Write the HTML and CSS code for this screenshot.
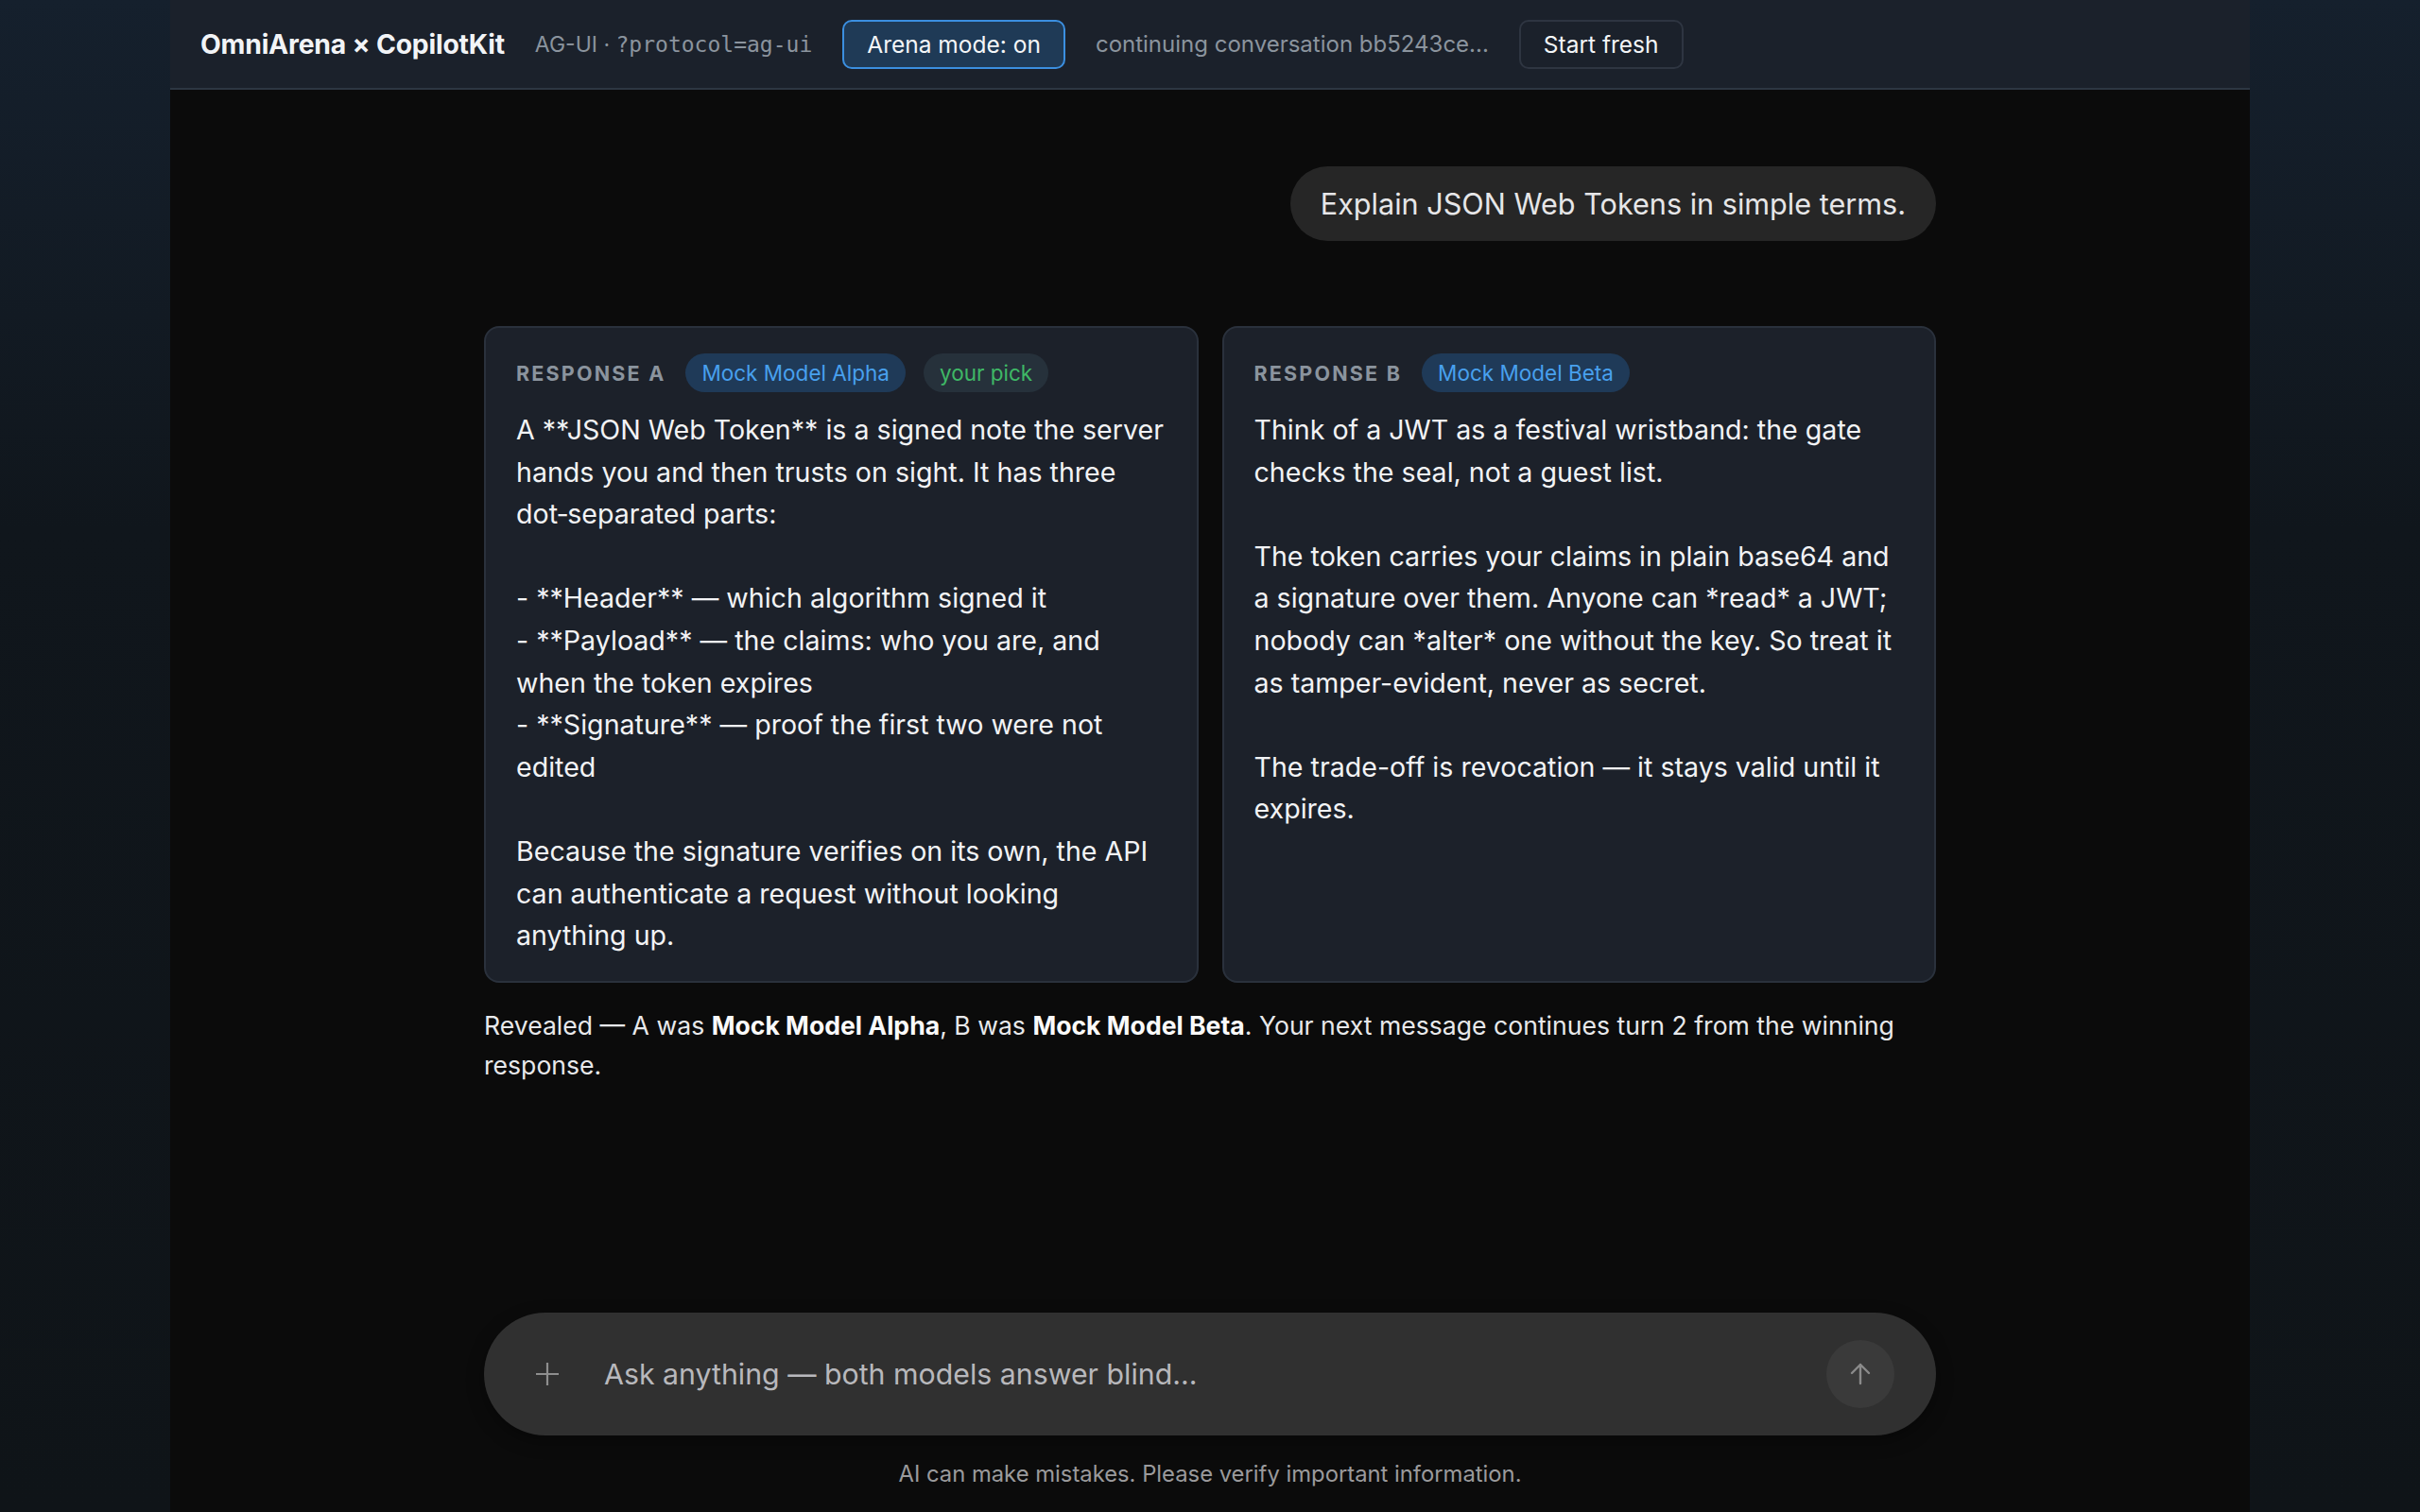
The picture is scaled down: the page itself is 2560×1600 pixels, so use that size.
FILE: index.html
```html
<!DOCTYPE html>
<html lang="en">
<head>
    <meta charset="UTF-8">
    <meta name="viewport" content="width=device-width, initial-scale=1.0">
    <title>OmniArena × CopilotKit</title>
    <link rel="stylesheet" href="styles.css">
</head>
<body>
<div class="app">
    <header class="topbar">
        <span class="brand">OmniArena × CopilotKit</span>
        <span class="proto">AG-UI · <code>?protocol=ag-ui</code></span>
        <button class="arena-btn">Arena mode: on</button>
        <span class="convo">continuing conversation bb5243ce...</span>
        <button class="fresh-btn">Start fresh</button>
    </header>

    <main class="thread">
        <div class="column">
            <div class="user-row">
                <div class="user-bubble">Explain JSON Web Tokens in simple terms.</div>
            </div>

            <div class="pair">
                <div class="card">
                    <div class="card-head">
                        <span class="label">Response A</span>
                        <span class="badge model">Mock Model Alpha</span>
                        <span class="badge pick">your pick</span>
                    </div>
<div class="card-body">A **JSON Web Token** is a signed note the server hands you and then trusts on sight. It has three dot&#8209;separated parts:

- **Header** — which algorithm signed it
- **Payload** — the claims: who you are, and when the token expires
- **Signature** — proof the first two were not edited

Because the signature verifies on its own, the API can authenticate a request without looking anything up.</div>
                </div>
                <div class="card">
                    <div class="card-head">
                        <span class="label">Response B</span>
                        <span class="badge model">Mock Model Beta</span>
                    </div>
<div class="card-body">Think of a JWT as a festival wristband: the gate checks the seal, not a guest list.

The token carries your claims in plain base64 and a signature over them. Anyone can *read* a JWT; nobody can *alter* one without the key. So treat it as tamper-evident, never as secret.

The trade-off is revocation — it stays valid until it expires.</div>
                </div>
            </div>

            <p class="reveal">Revealed — A was <b>Mock Model Alpha</b>, B was <b>Mock Model Beta</b>. Your next message continues turn 2 from the winning response.</p>
        </div>
    </main>

    <footer class="bottom">
        <form class="composer">
            <span class="plus">
                <svg width="26" height="26" viewBox="0 0 26 26"><path d="M13 1v24M1 13h24" stroke="#8e8e8e" stroke-width="2.2" fill="none"/></svg>
            </span>
            <input type="text" class="ask" placeholder="Ask anything — both models answer blind...">
            <button type="button" class="send">
                <svg width="30" height="30" viewBox="0 0 30 30"><path d="M15 25V5M6 14l9-9 9 9" stroke="#8a8a8a" stroke-width="2.4" fill="none" stroke-linecap="round" stroke-linejoin="round"/></svg>
            </button>
        </form>
        <p class="disclaimer">AI can make mistakes. Please verify important information.</p>
    </footer>
</div>
</body>
</html>
```

FILE: styles.css
```css
*{
    margin: 0;
    padding: 0;
    box-sizing: border-box;
}
body{
    font-family: Inter, "Noto Sans", sans-serif;
    background: linear-gradient(180deg, #15202d 0%, #10161c 35%, #0f1418 100%);
    color: #ececec;
    height: 100vh;
    overflow: hidden;
}
.app{
    width: 2200px;
    height: 100vh;
    margin: 0 auto;
    background: #0b0b0b;
    display: flex;
    flex-direction: column;
}
.topbar{
    height: 95px;
    flex-shrink: 0;
    background: #1b212b;
    border-bottom: 2px solid #2d3642;
    display: flex;
    align-items: center;
    gap: 32px;
    padding: 0 32px;
}
.brand{
    font-size: 28.3px;
    font-weight: 700;
    color: #f2f4f7;
    letter-spacing: -0.2px;
}
.proto{
    font-size: 23px;
    color: #8b949e;
    & code{
        font-family: "DejaVu Sans Mono", "Liberation Mono", monospace;
        font-size: 23px;
    }
}
.arena-btn, .fresh-btn{
    font-family: inherit;
    font-size: 24.5px;
    color: #f4f6f8;
    height: 52px;
    padding: 0 24px;
    border-radius: 10px;
    cursor: pointer;
}
.arena-btn{
    background: #1f3a56;
    border: 2px solid #3b8fe0;
}
.fresh-btn{
    background: transparent;
    border: 2px solid #2e3541;
}
.convo{
    font-size: 24px;
    color: #8b949e;
}

.thread{
    flex: 1;
    overflow: hidden;
}
.column{
    max-width: 1536px;
    margin: 0 auto;
    padding-top: 81px;
}
.user-row{
    display: flex;
    justify-content: flex-end;
}
.user-bubble{
    background: #262626;
    color: #e6e6e8;
    font-size: 30.6px;
    line-height: 45px;
    padding: 17px 32px;
    border-radius: 40px;
}
.pair{
    display: grid;
    grid-template-columns: 1fr 1fr;
    gap: 25px;
    margin-top: 90px;
}
.card{
    background: #1c212a;
    border: 2px solid #2a313c;
    border-radius: 16px;
    padding: 27px 32px 25px;
}
.card-head{
    display: flex;
    align-items: center;
    gap: 19px;
    margin-bottom: 18px;
}
.label{
    font-size: 21.5px;
    font-weight: 700;
    text-transform: uppercase;
    letter-spacing: 2.2px;
    color: #8b949e;
    margin-right: 2px;
}
.badge{
    font-size: 22.5px;
    height: 41px;
    line-height: 41px;
    padding: 0 17px;
    border-radius: 21px;
}
.model{
    background: #1f3a58;
    color: #48a0ee;
}
.pick{
    background: #26313b;
    color: #3fb866;
}
.card-body{
    white-space: pre-wrap;
    font-size: 28.6px;
    line-height: 44.6px;
    color: #f2f3f5;
}
.reveal{
    margin-top: 24px;
    font-size: 26.6px;
    line-height: 42.5px;
    color: #e8e9eb;
    & b{
        font-weight: 700;
        color: #fafafa;
    }
}

.bottom{
    flex-shrink: 0;
    max-width: 1536px;
    width: 100%;
    margin: 0 auto;
    padding-bottom: 24px;
}
.composer{
    height: 130px;
    background: #303030;
    border-radius: 65px;
    display: flex;
    align-items: center;
    padding: 0 44px 0 54px;
    box-shadow: 0 6px 18px rgba(0, 0, 0, 0.35);
}
.plus{
    display: flex;
    width: 26px;
    height: 26px;
}
.ask{
    flex: 1;
    margin-left: 47px;
    background: transparent;
    border: none;
    outline: none;
    font-family: inherit;
    font-size: 30.3px;
    color: #e6e6e6;
    &::placeholder{
        color: #b8b8bc;
    }
}
.send{
    width: 72px;
    height: 72px;
    border-radius: 50%;
    border: none;
    background: #3a3a3a;
    display: flex;
    align-items: center;
    justify-content: center;
}
.disclaimer{
    text-align: center;
    font-size: 23.8px;
    line-height: 33px;
    color: #9a9a9c;
    margin-top: 24px;
}
```
